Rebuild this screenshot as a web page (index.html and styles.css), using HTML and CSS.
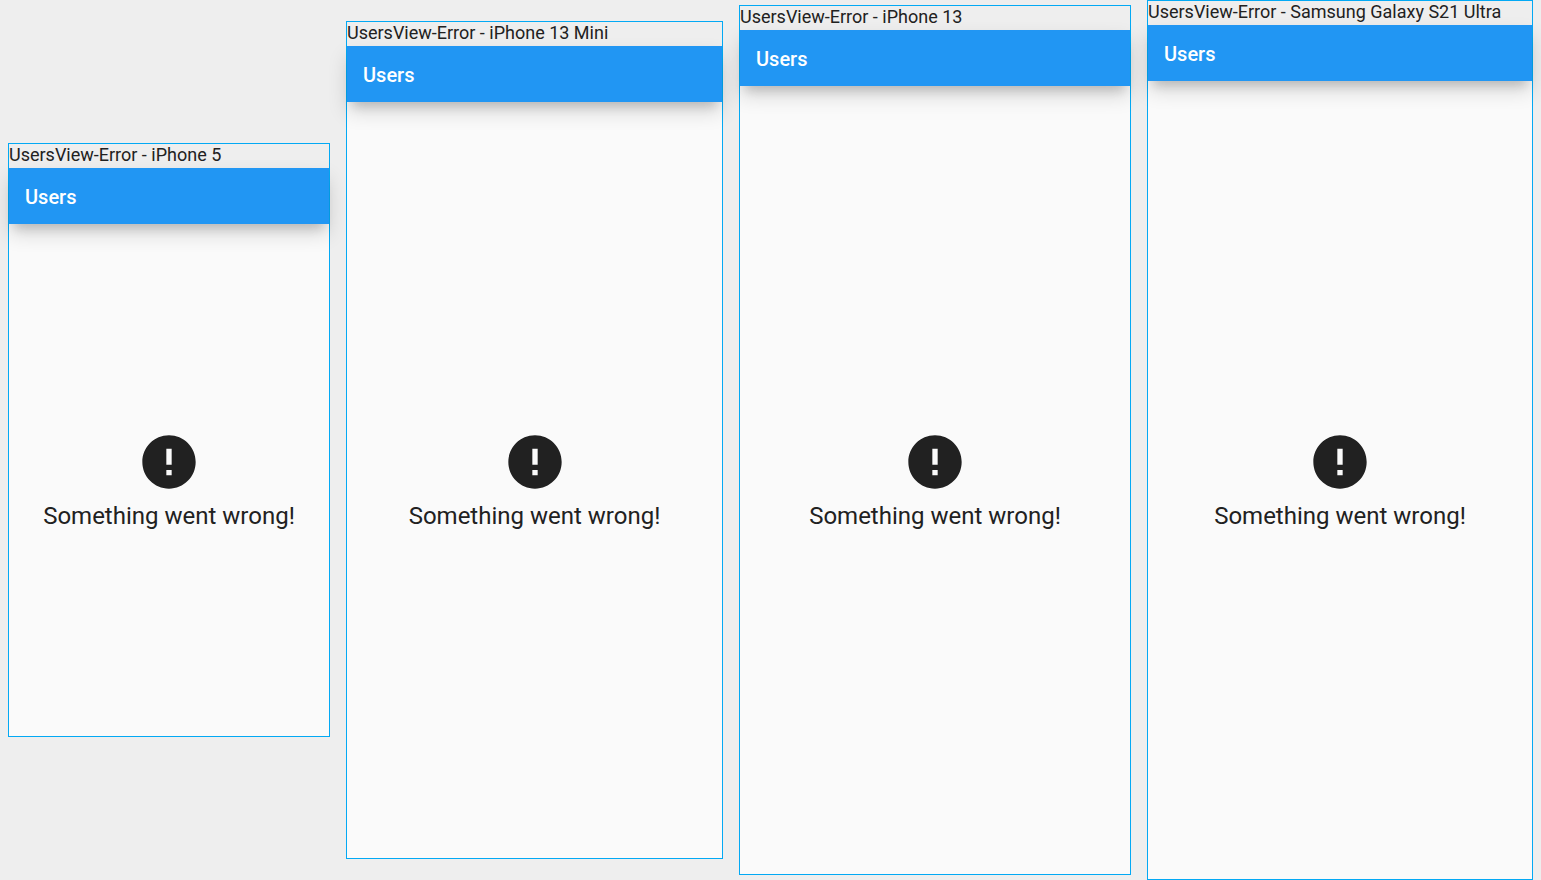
FILE: index.html
```html
<!DOCTYPE html>
<html lang="en">
<head>
<meta charset="utf-8">
<meta name="viewport" content="width=device-width, initial-scale=1">
<title>UsersView-Error</title>
<link rel="stylesheet" href="styles.css">
</head>
<body>
<svg class="sprite" aria-hidden="true">
  <symbol id="error" viewBox="0 0 24 24">
    <path d="M12 2C6.48 2 2 6.48 2 12s4.480 10 10 10 10-4.480 10-10S17.520 2 12 2zm1 15h-2v-2h2v2zm0-4h-2V7h2v6z"/>
  </symbol>
</svg>
<main class="devices">
  <section class="device">
    <h2 class="device-name">UsersView-Error - iPhone 5</h2>
    <div class="screen iphone-5">
      <header class="app-bar"><h1 class="app-title">Users</h1></header>
      <div class="message">
        <svg class="message-icon" aria-hidden="true"><use href="#error"/></svg>
        <p class="message-text">Something went wrong!</p>
      </div>
    </div>
  </section>
  <section class="device">
    <h2 class="device-name">UsersView-Error - iPhone 13 Mini</h2>
    <div class="screen iphone-13-mini">
      <header class="app-bar"><h1 class="app-title">Users</h1></header>
      <div class="message">
        <svg class="message-icon" aria-hidden="true"><use href="#error"/></svg>
        <p class="message-text">Something went wrong!</p>
      </div>
    </div>
  </section>
  <section class="device">
    <h2 class="device-name">UsersView-Error - iPhone 13</h2>
    <div class="screen iphone-13">
      <header class="app-bar"><h1 class="app-title">Users</h1></header>
      <div class="message">
        <svg class="message-icon" aria-hidden="true"><use href="#error"/></svg>
        <p class="message-text">Something went wrong!</p>
      </div>
    </div>
  </section>
  <section class="device">
    <h2 class="device-name">UsersView-Error - Samsung Galaxy S21 Ultra</h2>
    <div class="screen galaxy-s21-ultra">
      <header class="app-bar"><h1 class="app-title">Users</h1></header>
      <div class="message">
        <svg class="message-icon" aria-hidden="true"><use href="#error"/></svg>
        <p class="message-text">Something went wrong!</p>
      </div>
    </div>
  </section>
</main>
</body>
</html>
```

FILE: styles.css
```css
* {
  box-sizing: border-box;
}

body {
  margin: 0;
  background: #eeeeee;
  color: #212121;
  font-family: Roboto, "Liberation Sans", sans-serif;
}

h1,
h2,
p {
  margin: 0;
}

.sprite {
  display: none;
}

.devices {
  display: grid;
  grid-template-columns: 322fr 377fr 392fr 386fr;
  gap: 16px;
  align-items: center;
  min-height: 100vh;
  padding: 0 8px;
}

.device {
  min-width: 0;
  border: 1px solid #03a9f4;
}

.device-name {
  height: 24px;
  overflow: hidden;
  font-size: 18px;
  font-weight: 400;
  line-height: 22px;
  white-space: nowrap;
}

.screen {
  display: flex;
  flex-direction: column;
  background: #fafafa;
}

.iphone-5 {
  aspect-ratio: 320 / 568;
}

.iphone-13-mini {
  aspect-ratio: 375 / 812;
}

.iphone-13 {
  aspect-ratio: 390 / 844;
}

.galaxy-s21-ultra {
  aspect-ratio: 384 / 854;
}

.app-bar {
  display: flex;
  align-items: center;
  height: 56px;
  padding: 2px 16px 0;
  background: #2196f3;
  color: #ffffff;
  box-shadow:
    0 10px 10px -6px rgba(0, 0, 0, 0.16),
    0 10px 20px 0 rgba(0, 0, 0, 0.14);
}

.app-title {
  font-size: 20px;
  font-weight: 500;
  line-height: 24px;
}

.message {
  display: flex;
  flex: 1;
  flex-direction: column;
  align-items: center;
  justify-content: center;
  gap: 8px;
}

.message-icon {
  width: 64px;
  height: 64px;
  fill: #212121;
}

.message-text {
  font-size: 24px;
  line-height: 28px;
  text-align: center;
}
```
